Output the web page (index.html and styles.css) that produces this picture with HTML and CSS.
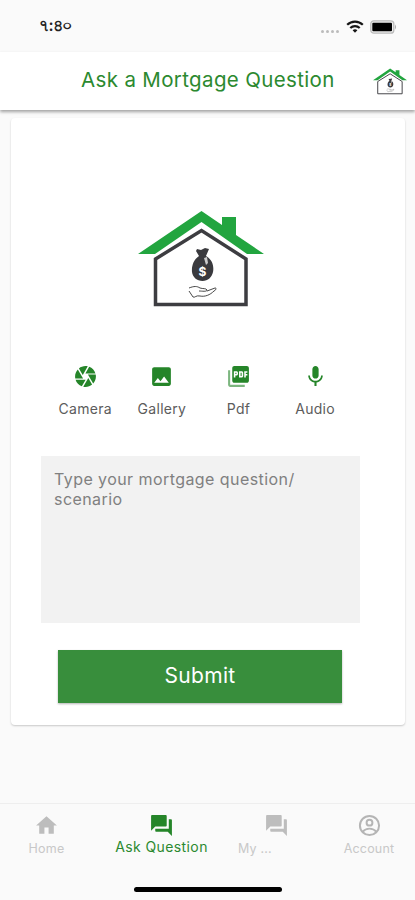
FILE: index.html
```html
<!DOCTYPE html>
<html lang="en">
<head>
    <meta charset="UTF-8">
    <meta name="viewport" content="width=device-width, initial-scale=1.0">
    <title>Ask a Mortgage Question</title>
    <link rel="stylesheet" href="styles.css">
</head>
<body>
    <!-- shared icons -->
    <svg class="sprite">
        <symbol id="house" viewBox="0 0 126 96">
            <path d="M0 43 63.500 0 84 14V6h14v18l28 19h-17L63.500 11 17 43z" fill="#22a53f"/>
            <path d="M17.500 48 63.500 19.500 108 48v45.500H17.500z" fill="#fff" stroke="#3d3d41" stroke-width="3.500"/>
            <path d="m59 38 4 1 4-2 4 1-3 7c7 4 8 11 7 16s-5 9-10.500 9-10-4-10.500-9 1-12 7-16l-3-5z" fill="#3a3a3e"/>
            <path d="m66 47 3-1 1 6-2 2z" fill="#ccc"/>
            <text x="64.500" y="65" class="dollar">$</text>
            <path d="M51 77c5-2 8-2 11 0 3 1 6 0 7 2 0 2-5 1-8 1m8 0 8-3c2 0 1 2-1 3-4 4-9 6-14 5-4-1-5 2-7 1l-4-6" fill="none" stroke="#333" stroke-width=".9"/>
        </symbol>
        <symbol id="forum" viewBox="0 0 24 24">
            <path d="M21 6h-2v9H6v2c0 .55.45 1 1 1h11l4 4V7c0-.55-.45-1-1-1zm-4 6V3c0-.55-.45-1-1-1H3c-.55 0-1 .45-1 1v14l4-4h10c.55 0 1-.45 1-1z"/>
        </symbol>
    </svg>

    <div class="status-bar">
        <span class="time">৭:৪০</span>
        <div class="status-icons">
            <svg class="dots" width="20" height="5" viewBox="0 0 20 5"><g fill="#bbb"><circle cx="2.500" cy="2.500" r="1.500"/><circle cx="7.500" cy="2.500" r="1.500"/><circle cx="12.500" cy="2.500" r="1.500"/><circle cx="17.500" cy="2.500" r="1.500"/></g></svg>
            <svg width="18" height="13" viewBox="0 0 18 13"><g fill="none" stroke="#161616" stroke-width="2.200"><path d="M1.200 4.800a11 11 0 0 1 15.600 0M4.300 8a6.700 6.700 0 0 1 9.400 0"/></g><path d="M6.600 10.300a3.500 3.500 0 0 1 4.800 0L9 12.700z" fill="#161616"/></svg>
            <svg width="27" height="14" viewBox="0 0 27 14"><rect x=".8" y=".8" width="23" height="12.400" rx="3" fill="#eee" stroke="#bbb" stroke-width="1.300"/><rect x="2.300" y="2.700" width="19.700" height="8.600" rx="1" fill="#000"/><path d="M25 4.500q2 2.500 0 5z" fill="#aaa"/></svg>
        </div>
    </div>

    <header class="app-bar">
        <h1>Ask a Mortgage Question</h1>
        <svg class="app-logo"><use href="#house"/></svg>
    </header>

    <main>
        <form class="card">
            <svg class="logo"><use href="#house"/></svg>
            <div class="attachments">
                <div class="attachment">
                    <svg viewBox="0 0 24 24"><path d="M9.400 10.500l4.770-8.260C13.470 2.090 12.750 2 12 2c-2.400 0-4.600.85-6.320 2.250l3.660 6.350.06-.1zM21.540 9c-.92-2.920-3.150-5.260-6-6.340L11.880 9h9.660zm.26 1h-7.490l.29.5 4.760 8.250C21 16.970 22 14.610 22 12c0-.69-.07-1.350-.2-2zM8.540 12l-3.900-6.750C3.010 7.030 2 9.390 2 12c0 .69.07 1.350.2 2h7.490l-1.150-2zm-6.080 3c.92 2.920 3.150 5.260 6 6.340L12.120 15H2.460zm11.270 0l-3.900 6.760c.7.15 1.420.24 2.170.24 2.400 0 4.600-.85 6.320-2.250l-3.660-6.350-.93 1.600z"/></svg>
                    <span>Camera</span>
                </div>
                <div class="attachment">
                    <svg viewBox="0 0 24 24"><path d="M21 19V5c0-1.100-.9-2-2-2H5c-1.100 0-2 .9-2 2v14c0 1.100.9 2 2 2h14c1.100 0 2-.9 2-2zM8.500 13.500l2.500 3.010L14.500 12l4.500 6H5l3.500-4.500z"/></svg>
                    <span>Gallery</span>
                </div>
                <div class="attachment">
                    <svg viewBox="0 0 24 24"><path d="M20 2H8c-1.100 0-2 .9-2 2v12c0 1.100.9 2 2 2h12c1.100 0 2-.9 2-2V4c0-1.100-.9-2-2-2zm-8.500 7.500c0 .83-.67 1.500-1.500 1.500H9v2H7.500V7H10c.83 0 1.500.67 1.500 1.500v1zm5 2c0 .83-.67 1.500-1.500 1.500h-2.500V7H15c.83 0 1.500.67 1.500 1.500v3zm4-3H19v1h1.500V11H19v2h-1.500V7h3v1.500zM9 9.500h1v-1H9v1zM14 11.500h1v-3h-1v3z"/><path d="M4 6H2v14c0 1.100.9 2 2 2h14v-2H4V6z" opacity=".6"/></svg>
                    <span>Pdf</span>
                </div>
                <div class="attachment">
                    <svg viewBox="0 0 24 24"><path d="M12 14c1.660 0 2.990-1.340 2.990-3L15 5c0-1.660-1.340-3-3-3S9 3.340 9 5v6c0 1.660 1.340 3 3 3zm5.300-3c0 3-2.540 5.100-5.300 5.100S6.700 14 6.700 11H5c0 3.410 2.720 6.230 6 6.720V21h2v-3.280c3.280-.48 6-3.300 6-6.720h-1.700z"/></svg>
                    <span>Audio</span>
                </div>
            </div>
            <textarea placeholder="Type your mortgage question/&#10;scenario"></textarea>
            <button type="button">Submit</button>
        </form>
    </main>

    <nav class="bottom-nav">
        <a class="nav-item">
            <svg viewBox="0 0 24 24"><path d="M10 20v-6h4v6h5v-8h3L12 3 2 12h3v8z"/></svg>
            <span>Home</span>
        </a>
        <a class="nav-item active">
            <svg><use href="#forum"/></svg>
            <span>Ask Question</span>
        </a>
        <a class="nav-item messages">
            <svg><use href="#forum"/></svg>
            <span>My ...</span>
        </a>
        <a class="nav-item">
            <svg viewBox="0 0 24 24"><g fill="none" stroke="currentColor" stroke-width="1.900"><circle cx="12" cy="12" r="9.200"/><circle cx="12" cy="9.300" r="2.800"/><path d="M5.500 18c3-4 10-4 13 0"/></g></svg>
            <span>Account</span>
        </a>
    </nav>
    <div class="home-indicator"></div>
</body>
</html>
```
FILE: styles.css
```css
* {
    box-sizing: border-box;
}
body {
    font-family: Inter, "Noto Sans", sans-serif;
    background-color: #fafafa;
    margin: 0;
    height: 900px;
    display: flex;
    flex-direction: column;
    overflow: hidden;
}
.sprite {
    display: none;
}
.status-bar {
    height: 52px;
    flex: none;
    display: flex;
    justify-content: space-between;
    align-items: center;
    padding: 1px 18px 0 39px;
}
.time {
    font-size: 16px;
    font-weight: 600;
    letter-spacing: -0.6px;
    color: #222;
}
.status-icons {
    display: flex;
    align-items: center;
    gap: 6px;
}
.dots {
    margin-top: 9px;
}
.app-bar {
    height: 58px;
    flex: none;
    display: flex;
    align-items: center;
    justify-content: space-between;
    padding: 0 8px 4px 81px;
    background: #fff;
    box-shadow: 0 2px 3px rgba(0, 0, 0, 0.35);
    z-index: 1;
}
h1 {
    margin: 0;
    font-size: 20.5px;
    font-weight: 400;
    letter-spacing: 0.35px;
    color: #2b892f;
    white-space: nowrap;
}
.app-logo {
    width: 34px;
    height: 27px;
    margin-top: 5px;
}
.dollar {
    font-size: 12px;
    font-weight: 700;
    fill: #fff;
    text-anchor: middle;
}
main {
    flex: 1;
    padding: 8px 10px 0 11px;
}
.card {
    height: 607px;
    background: #fff;
    border-radius: 4px;
    box-shadow: 0 1px 2px rgba(0, 0, 0, 0.2);
    display: flex;
    flex-direction: column;
    padding: 93px 45px 0 30px;
}
.logo {
    width: 126px;
    height: 96px;
    margin-left: 96.5px;
    flex: none;
}
.attachments {
    display: grid;
    grid-template-columns: repeat(4, 76.6px);
    margin: 56.5px 0 0 6px;
}
.attachment {
    display: flex;
    flex-direction: column;
    align-items: center;
    gap: 11.5px;
    font-size: 14px;
    line-height: 17px;
    letter-spacing: 0.3px;
    color: #5c5c5c;
}
.attachment svg {
    width: 25px;
    height: 25px;
    fill: #258529;
}
textarea {
    width: 319px;
    height: 167px;
    margin: 39px 0 0;
    padding: 13px;
    flex: none;
    border: none;
    resize: none;
    background: #f2f2f2;
    font-family: inherit;
    font-size: 16px;
    line-height: 20px;
    letter-spacing: 0.43px;
}
textarea::placeholder {
    color: #808080;
}
button {
    width: 284px;
    height: 53px;
    margin: 27px 0 0 17px;
    padding: 0 6px 2px;
    flex: none;
    border: none;
    background: #388e3c;
    color: #fff;
    font-family: inherit;
    font-size: 21px;
    letter-spacing: 0.3px;
    box-shadow: 0 1px 2px rgba(0, 0, 0, 0.3);
}
.bottom-nav {
    height: 84px;
    flex: none;
    display: grid;
    grid-template-columns: 93px 137px 93px 92px;
    border-top: 1px solid #eee;
    padding-top: 9px;
}
.nav-item {
    display: flex;
    flex-direction: column;
    align-items: center;
    gap: 3px;
    font-size: 12.5px;
    line-height: 16px;
    letter-spacing: 0.2px;
    color: #c8c8c8;
}
.nav-item svg {
    width: 25px;
    height: 25px;
    fill: #bdbdbd;
    color: #b5b5b5;
}
.active {
    gap: 1px;
    color: #2b892f;
    font-size: 14px;
    letter-spacing: 0.4px;
}
.nav-item.active svg {
    fill: #258529;
}
.messages span {
    align-self: flex-start;
    margin-left: 8px;
}
.home-indicator {
    width: 148px;
    height: 5px;
    flex: none;
    margin: 0 0 8px 134px;
    border-radius: 3px;
    background: #000;
}
```
